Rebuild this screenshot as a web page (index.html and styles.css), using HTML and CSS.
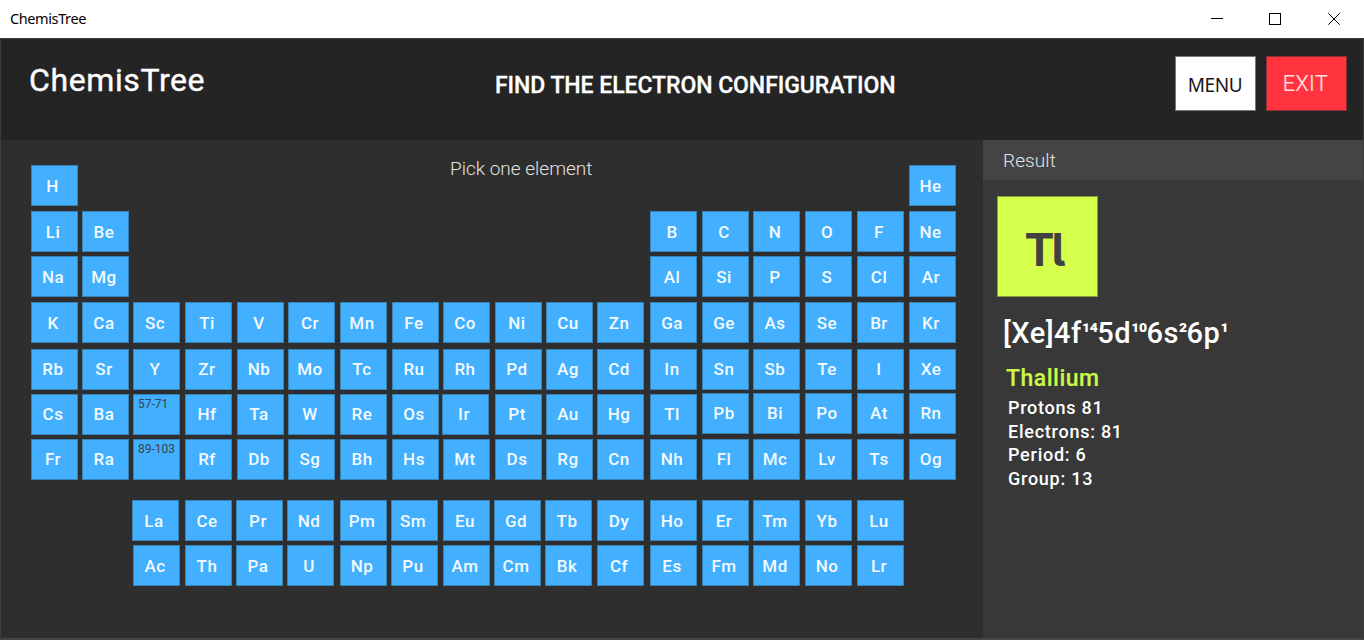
FILE: index.html
```html
<!DOCTYPE html>
<html lang="en">
<head>
<meta charset="utf-8">
<title>ChemisTree</title>
<link rel="stylesheet" href="styles.css">
</head>
<body>
<div class="titlebar">
  <span class="window-title">ChemisTree</span>
  <svg class="controls" width="144" height="38" viewBox="0 0 144 38" fill="none" stroke="#000" stroke-width="1">
    <path d="M7 18.5H19M65.500 13.500h11v11h-11z" shape-rendering="crispEdges"/>
    <path d="M124.300 13.300l11.400 11.400M135.700 13.300l-11.400 11.400"/>
  </svg>
</div>
<div class="app">
  <header class="header">
    <h1 class="brand">ChemisTree</h1>
    <h2 class="heading">FIND THE ELECTRON CONFIGURATION</h2>
    <div class="actions">
      <button class="btn menu">MENU</button>
      <button class="btn exit">EXIT</button>
    </div>
  </header>
  <div class="body">
    <main class="board">
      <div class="row low"><b class="narrow">H</b><p class="hint">Pick one element</p><b class="c18 narrow">He</b></div>
      <div class="row short low"><b>Li</b><b>Be</b><b class="c13">B</b><b>C</b><b>N</b><b>O</b><b>F</b><b class="narrow">Ne</b></div>
      <div class="row low"><b>Na</b><b>Mg</b><b class="c13">Al</b><b>Si</b><b>P</b><b>S</b><b>Cl</b><b>Ar</b></div>
      <div class="row tall low"><b>K</b><b>Ca</b><b>Sc</b><b>Ti</b><b>V</b><b>Cr</b><b>Mn</b><b>Fe</b><b>Co</b><b>Ni</b><b>Cu</b><b>Zn</b><b>Ga</b><b>Ge</b><b>As</b><b>Se</b><b>Br</b><b>Kr</b></div>
      <div class="row short"><b>Rb</b><b>Sr</b><b>Y</b><b>Zr</b><b>Nb</b><b>Mo</b><b>Tc</b><b>Ru</b><b>Rh</b><b>Pd</b><b>Ag</b><b>Cd</b><b>In</b><b>Sn</b><b>Sb</b><b>Te</b><b>I</b><b>Xe</b></div>
      <div class="row short"><b>Cs</b><b>Ba</b><b class="range">57-71</b><b>Hf</b><b>Ta</b><b>W</b><b>Re</b><b>Os</b><b class="left">Ir</b><b>Pt</b><b>Au</b><b>Hg</b><b>Tl</b><b class="up">Pb</b><b class="up">Bi</b><b class="up">Po</b><b class="up">At</b><b class="up">Rn</b></div>
      <div class="row last"><b>Fr</b><b>Ra</b><b class="range">89-103</b><b>Rf</b><b>Db</b><b>Sg</b><b>Bh</b><b>Hs</b><b>Mt</b><b>Ds</b><b>Rg</b><b>Cn</b><b>Nh</b><b>Fl</b><b>Mc</b><b>Lv</b><b>Ts</b><b>Og</b></div>
      <div class="row short low"><b class="c3 left">La</b><b>Ce</b><b class="left">Pr</b><b class="left">Nd</b><b>Pm</b><b class="left">Sm</b><b>Eu</b><b class="left">Gd</b><b class="left">Tb</b><b>Dy</b><b>Ho</b><b>Er</b><b>Tm</b><b>Yb</b><b>Lu</b></div>
      <div class="row short low"><b class="c3">Ac</b><b>Th</b><b class="left">Pa</b><b class="left">U</b><b>Np</b><b class="left">Pu</b><b>Am</b><b class="left">Cm</b><b class="left">Bk</b><b>Cf</b><b>Es</b><b>Fm</b><b>Md</b><b>No</b><b>Lr</b></div>
    </main>
    <aside class="result">
      <div class="result-title">Result</div>
      <div class="symbol">Tl</div>
      <p class="config">[Xe]4f<span class="exp">¹⁴</span>5d<span class="exp">¹⁰</span>6s<span class="exp">²</span>6p<span class="exp">¹</span></p>
      <p class="name">Thallium</p>
      <ul class="facts">
        <li>Protons 81</li>
        <li>Electrons: 81</li>
        <li>Period: 6</li>
        <li>Group: 13</li>
      </ul>
    </aside>
  </div>
</div>
</body>
</html>
```

FILE: styles.css
```css
* { box-sizing: border-box; }
body {
  margin: 0;
  width: 1364px;
  height: 640px;
  overflow: hidden;
  display: flex;
  flex-direction: column;
  background: #fff;
  font-family: Roboto, "Liberation Sans", sans-serif;
  color: #fff;
}
h1, h2, p, ul { margin: 0; padding: 0; font-weight: 500; }
ul { list-style: none; }

.titlebar {
  height: 38px;
  flex: none;
  display: flex;
  justify-content: space-between;
  padding: 0 16px 0 10px;
  color: #000;
  font: 14.500px/37px "Noto Sans", sans-serif;
}
.window-title { letter-spacing: -0.400px; }

.app {
  flex: 1;
  display: flex;
  flex-direction: column;
  background: #2e2e2e;
  border: 1px solid #3b3c3b;
  border-bottom: 2px solid #4a4347;
}
.header {
  height: 101px;
  flex: none;
  display: flex;
  align-items: flex-start;
  background: #242424;
}
.brand { width: 466px; padding: 22px 0 0 28px; font-size: 32px; line-height: 38px; letter-spacing: .600px; font-weight: 400; -webkit-text-stroke: .4px #fff; }
.heading { flex: 1; padding: 33px 0 0 28px; font-size: 23px; line-height: 28px; letter-spacing: -.060px; white-space: nowrap; -webkit-text-stroke: .3px #fff; }
.actions { display: flex; gap: 10px; padding: 17px 16px 0 0; }
.btn { width: 81px; height: 55px; padding: 0; font-size: 20px; line-height: 24px; border: 1px solid #777; }
.menu { background: #fff; color: #161616; padding: 2px 1px 0 0; font-family: "Noto Sans", sans-serif; font-size: 19px; letter-spacing: -.400px; }
.exit { background: #ff343e; color: #ffe5e5; border-color: #8d2c31; padding-right: 2px; font-weight: 300; font-family: Roboto, sans-serif; font-size: 21.500px; letter-spacing: .500px; -webkit-text-stroke: .2px #ffe5e5; }

.body { flex: 1; display: flex; min-height: 0; }
.board { width: 982px; padding: 25px 0 0 30px; }
.row {
  display: grid;
  grid-template-columns: 51px 51px 52px 52px 51px 52px 52px 51px 52px 51px 51px 53px 52px 51px 52px 52px 52px 47px;
  align-items: start;
  height: 46px;
}
.row.short { height: 45px; }
.row.tall { height: 47px; }
.row.last { height: 61px; }
.row b {
  width: 47px;
  height: 41px;
  padding: 0 3px 0 0;
  background: #42b0ff;
  border: 1px solid #3882b6;
  color: #f3faff;
  font-size: 17px;
  font-weight: 500;
  line-height: 38px;
  letter-spacing: .500px;
  text-align: center;
}
.row.low b { line-height: 40px; }
.hint {
  grid-column: 9 / 13;
  padding: 0 0 0 7px;
  margin-top: -9px;
  font-size: 19px;
  line-height: 26px;
  font-weight: 300;
  color: #e2e2e2;
}
.c3 { grid-column: 3; }
.c13 { grid-column: 13; }
.c18 { grid-column: 18; }
.row .narrow { padding-right: 4px; }
.row .left { margin-left: -1px; }
.row .up { margin-top: -1px; }
.row .range { padding: 2px 0 0 4px; font-size: 12px; line-height: 14px; font-weight: 400; letter-spacing: 0; text-align: left; color: #38424a; }

.result { flex: 1; background: #383838; }
.result-title { height: 41px; padding-left: 20px; background: #444; border-bottom: 1px solid #3d3d3d; font-size: 19px; line-height: 41px; font-weight: 300; letter-spacing: .100px; color: #e2e2e2; }
.symbol {
  width: 101px;
  height: 101px;
  margin: 15px 0 0 14px;
  padding: 3px 8px 0 0;
  border: 1px solid #889d42;
  background: #d4ff4b;
  color: #414141;
  font: 700 45px/100px Inter, sans-serif;
  font-feature-settings: "cv05";
  letter-spacing: -3px;
  text-align: center;
}
.config { padding: 17px 0 0 20px; font-size: 29px; line-height: 38px; letter-spacing: .450px; white-space: nowrap; }
.exp { font-size: 23px; line-height: 1; font-weight: 700; letter-spacing: -.800px; vertical-align: 4px; }
.name { padding: 11px 0 0 23px; font-size: 23px; line-height: 32px; color: #cdf746; letter-spacing: .500px; -webkit-text-stroke: .2px #cdf746; }
.facts { padding: 1px 0 0 25px; font-size: 18px; line-height: 23.700px; font-weight: 500; letter-spacing: .750px; }
```
